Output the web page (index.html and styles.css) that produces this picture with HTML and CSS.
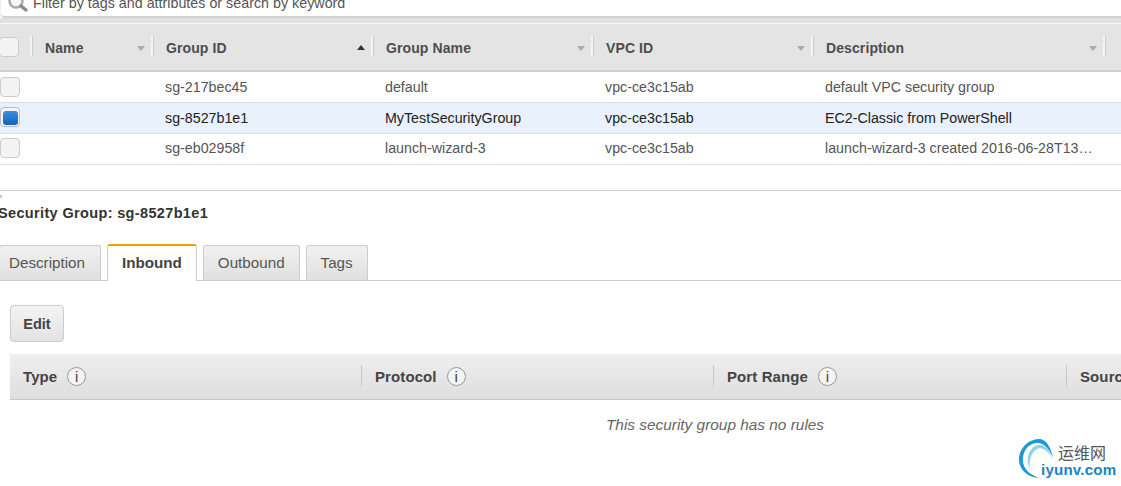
FILE: index.html
```html
<!DOCTYPE html>
<html lang="en">
<head>
<meta charset="utf-8">
<title>Security Groups</title>
<link rel="stylesheet" href="styles.css">
</head>
<body>
<div class="search">
  <svg class="search-icon" width="22" height="16" viewBox="0 0 22 16"><circle cx="9" cy="1" r="6.5" fill="#f6f6f6" stroke="#aaa" stroke-width="2.5"/><path d="M14 6l5 4" stroke="#8a8a8a" stroke-width="3.5" stroke-linecap="round"/></svg>
  <span class="search-text">Filter by tags and attributes or search by keyword</span>
</div>
<div class="band"></div>
<div class="thead">
  <div class="th th-check"><span class="check head-check"></span></div>
  <div class="th"><span class="th-label">Name</span><span class="arrow"></span></div>
  <div class="th"><span class="th-label">Group ID</span><span class="arrow up"></span></div>
  <div class="th"><span class="th-label">Group Name</span><span class="arrow"></span></div>
  <div class="th"><span class="th-label">VPC ID</span><span class="arrow"></span></div>
  <div class="th"><span class="th-label">Description</span><span class="arrow"></span></div>
</div>
<div class="row">
  <div class="cell-check"><span class="check"></span></div><div></div>
  <div class="td">sg-217bec45</div><div class="td">default</div><div class="td">vpc-ce3c15ab</div><div class="td">default VPC security group</div>
</div>
<div class="row selected">
  <div class="cell-check"><span class="check on"></span></div><div></div>
  <div class="td">sg-8527b1e1</div><div class="td">MyTestSecurityGroup</div><div class="td">vpc-ce3c15ab</div><div class="td">EC2-Classic from PowerShell</div>
</div>
<div class="row row-last">
  <div class="cell-check"><span class="check"></span></div><div></div>
  <div class="td">sg-eb02958f</div><div class="td">launch-wizard-3</div><div class="td">vpc-ce3c15ab</div><div class="td">launch-wizard-3 created 2016-06-28T13…</div>
</div>
<div class="details">
  <span class="dot"></span>
  <h2 class="title">Security Group: sg-8527b1e1</h2>
  <div class="tabs">
    <span class="tab tab-first">Description</span>
    <span class="tab active">Inbound</span>
    <span class="tab">Outbound</span>
    <span class="tab">Tags</span>
  </div>
  <div class="panel">
    <button class="edit">Edit</button>
    <div class="rules-head">
      <div class="rh"><b>Type</b><span class="info">i</span></div>
      <div class="rh"><b>Protocol</b><span class="info">i</span></div>
      <div class="rh"><b>Port Range</b><span class="info">i</span></div>
      <div class="rh"><b>Source</b></div>
    </div>
    <p class="empty">This security group has no rules</p>
  </div>
</div>
<div class="logo">
  <svg class="logo-mark" width="52" height="44" viewBox="0 0 52 44">
    <path d="M21 39C8 38 0 29 1 18 3 6 13 0 21 0c7 0 12 8 14 19C31 9 25 3 18 4 9 5 4 14 5 23c1 8 8 13 16 16z" fill="#1a9bd7"/>
    <path d="M12 30C7 20 11 8 20 6c6-1 10 3 13 11-5-7-10-9-14-7-6 3-8 12-7 20z" fill="#8fd3ee"/>
  </svg>
  <span class="logo-cn">运维网</span>
  <span class="logo-en">iyunv.com</span>
</div>
</body>
</html>
```
FILE: styles.css
```css
* { box-sizing: border-box; }
html, body { margin: 0; height: 486px; overflow: hidden; background: #fff; }
body { font-family: "Liberation Sans", Arial, sans-serif; font-size: 14.25px; color: #444; position: relative; }

.search { height: 18px; border-bottom: 2px solid #d0d0d0; border-left: 1px solid #eee; border-radius: 0 0 0 5px; display: flex; overflow: hidden; padding-left: 6px; background: #fff; }
.search-icon { flex: none; }
.search-text { margin: -7px 0 0 4px; line-height: 20px; font-size: 14.3px; color: #555; white-space: nowrap; }

.band { height: 6px; background: #e1e1e1; border-bottom: 1px solid #f6f6f6; }

.thead, .row { display: grid; grid-template-columns: 32px 121px 220px 220px 220px 292px 16px; }
.thead { height: 48px; background: #e4e4e4; border-bottom: 2px solid #cfcfcf; }
.th { display: flex; align-items: center; height: 46px; position: relative; padding: 2px 12px 0 13px; font-size: 14px; font-weight: bold; color: #4d4d4d; letter-spacing: .1px; }
.th::after { content: ""; position: absolute; right: -1px; top: 12px; height: 20px; width: 2px; background: #f4f4f4; border-right: 1px solid #ccc; }
.th-check { padding: 0; }
.th-label { flex: 1; }
.arrow { width: 0; height: 0; border: 4px solid transparent; border-top: 5px solid #aaa; border-bottom: 0; margin-right: -4px; margin-top: 1px; }
.arrow.up { border-top: 0; border-bottom: 5px solid #333; margin-top: -2px; }

.check { display: block; width: 20px; height: 20px; border: 1px solid #ccc; border-radius: 4px; background: #f3f3f3; }
.head-check { margin-left: -1px; }
.cell-check { padding-top: 5px; }
.selected .cell-check, .row-last .cell-check { padding-top: 4px; }
.check.on { padding: 3px 2px; border-color: #bbb; }
.check.on::before { content: ""; display: block; width: 15px; height: 14px; border-radius: 3px; background: linear-gradient(#3a8ee0, #1164bc); }
.row { height: 31px; border-bottom: 1px solid #dedede; color: #555; }
.td { padding-left: 12px; line-height: 30px; white-space: nowrap; overflow: hidden; }
.row-last .td { line-height: 28px; }
.selected { background: #e9f1fc; color: #222; }

.details { margin-top: 25px; border-top: 1px solid #d0d0d0; position: relative; }
.dot { position: absolute; left: 0; top: 4px; width: 2px; height: 3px; background: #ccc; }
.title { margin: 14px 0 0 -2px; font-size: 14.5px; line-height: 16px; color: #333; font-weight: bold; letter-spacing: .35px; }
.tabs { display: flex; align-items: flex-end; gap: 6px; height: 37px; margin-top: 23px; border-bottom: 1px solid #ccc; font-size: 15.2px; }
.tab { display: block; height: 35px; line-height: 34px; padding: 0 14px; border: 1px solid #ccc; border-bottom: 0; border-radius: 3px 3px 0 0; background: linear-gradient(#f1f1f1, #e0e0e0); color: #555; }
.tab-first { padding: 0 15px 0 9px; margin-left: -1px; }
.tab.active { height: 37px; margin-bottom: -1px; line-height: 34px; padding: 0 14px; background: #fff; border-top: 2px solid #f90; font-weight: bold; color: #444; }

.panel { padding: 24px 0 0 10px; }
.edit { display: block; width: 54px; height: 37px; padding: 0; border: 1px solid #ccc; border-radius: 4px; background: linear-gradient(#f4f4f4, #e2e2e2); font: bold 14.5px "Liberation Sans", Arial, sans-serif; color: #444; }
.rules-head { display: grid; grid-template-columns: 351px 352px 353px 1fr; height: 46px; margin-top: 12px; background: linear-gradient(#efefef, #dedede); border-bottom: 1px solid #c8c8c8; }
.rh { display: flex; align-items: center; gap: 10px; padding-left: 13px; position: relative; color: #444; white-space: nowrap; font-size: 15px; letter-spacing: .1px; overflow: hidden; }
.rh + .rh { padding-left: 14px; }
.rh + .rh::before { content: ""; position: absolute; left: 0; top: 11px; height: 22px; width: 1px; background: #c8c8c8; }
.info { width: 19px; height: 19px; border: 1px solid #999; border-radius: 50%; background: #f4f4f4; text-align: center; font: 15px/17px "Liberation Sans", Arial, sans-serif; color: #444; }
.empty { margin: 15px 0 0; text-align: center; font-style: italic; font-size: 15.4px; line-height: 20px; color: #666; padding-left: 299px; }

.logo { position: absolute; left: 1018px; top: 439px; width: 103px; height: 44px; }
.logo-mark { position: absolute; left: 0; top: 0; }
.logo-cn { position: absolute; left: 40px; top: 6px; font: 16px/15px "Noto Sans CJK SC", sans-serif; color: #555; }
.logo-en { position: absolute; left: 23px; top: 24px; font: bold 15.1px/14px "Liberation Sans", Arial, sans-serif; color: #1785c7; letter-spacing: .2px; }
```
